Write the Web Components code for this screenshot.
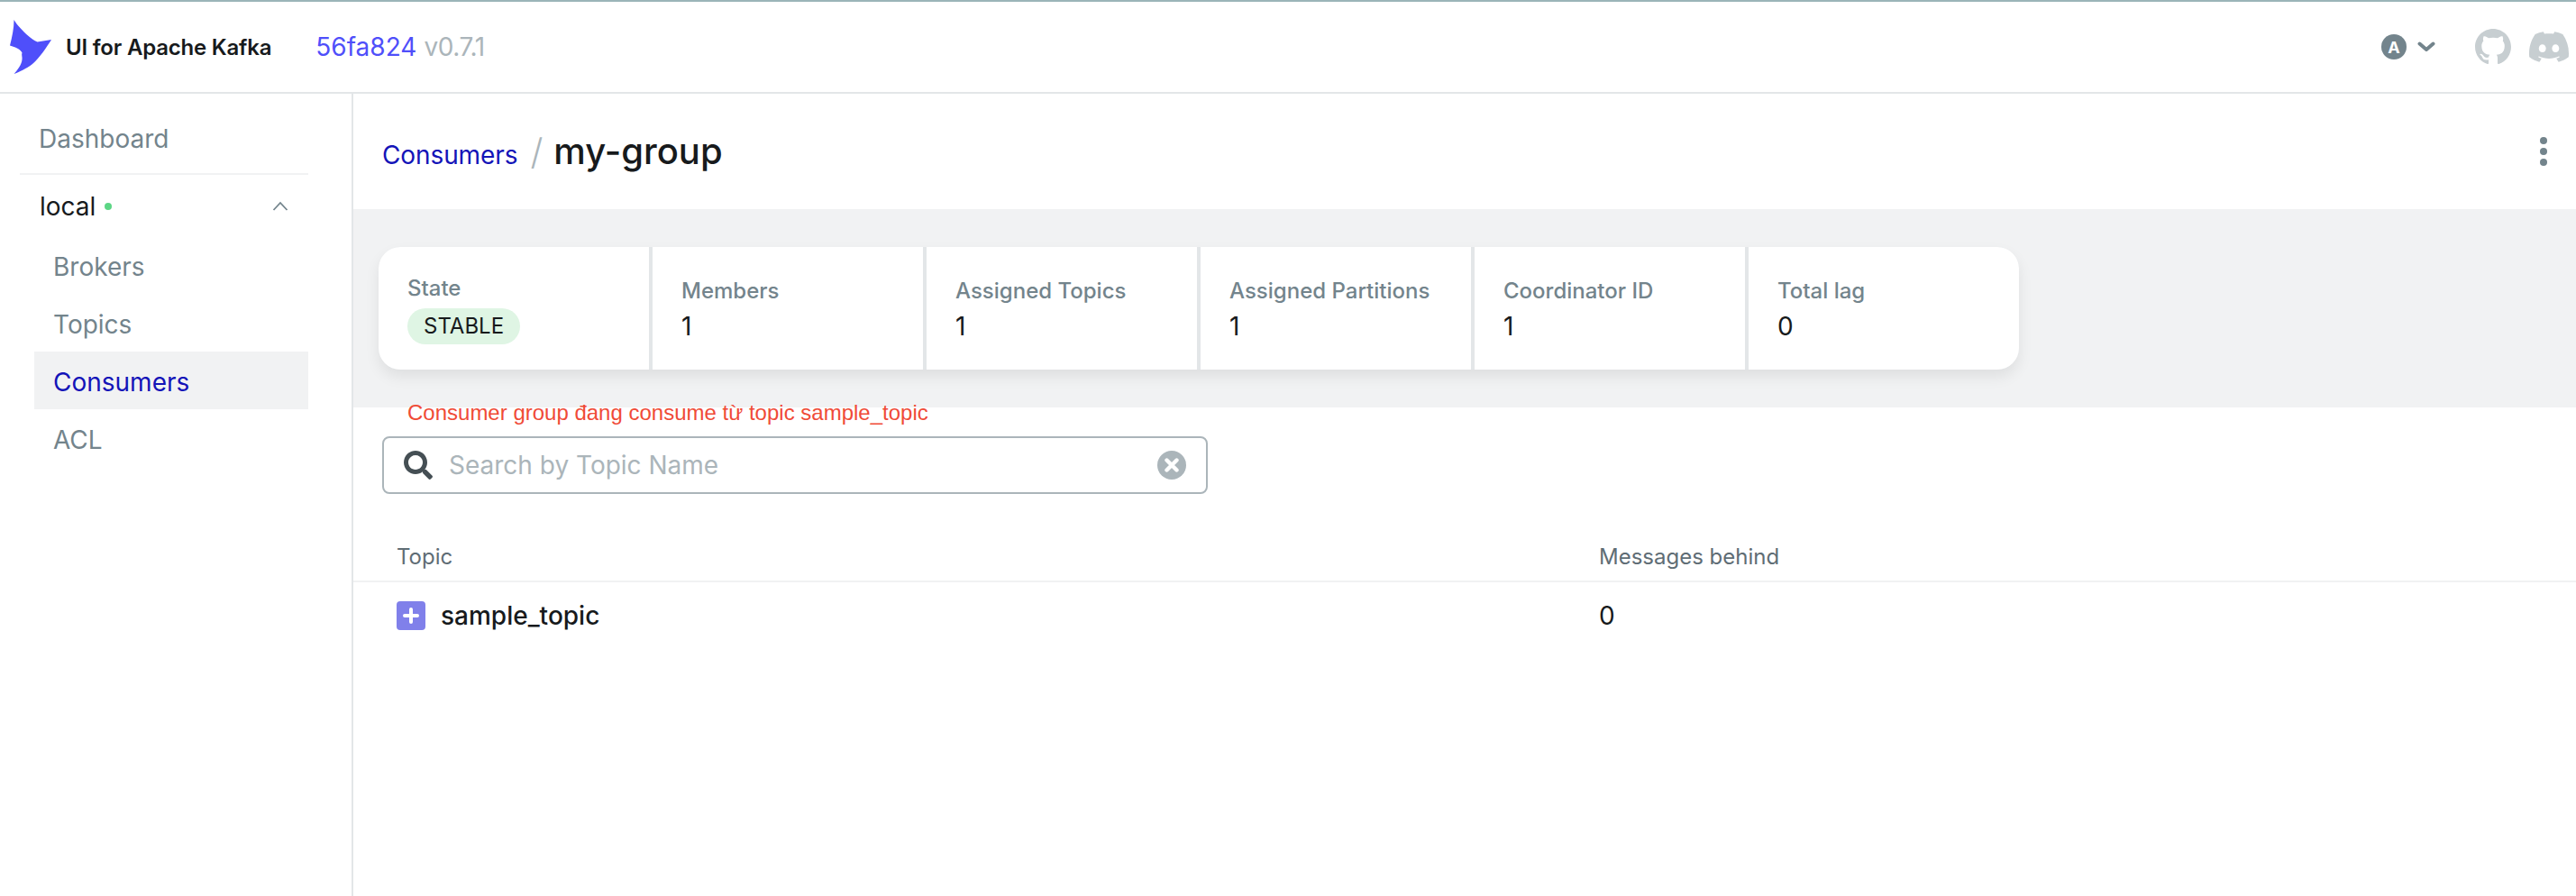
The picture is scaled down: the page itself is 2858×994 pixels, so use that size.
<!DOCTYPE html>
<html lang="en"><head><meta charset="utf-8"><title>UI for Apache Kafka</title>
<style>
html,body{margin:0;height:100%;background:#fff}
body{font-family:Inter,"Noto Sans",sans-serif;color:#171a1c;font-size:28px}
</style></head><body>
<kafka-app></kafka-app>
<script>
function def(name, css, html){
  customElements.define(name, class extends HTMLElement{
    constructor(){super();const s=this.attachShadow({mode:'open'});s.innerHTML='<style>'+css+'</style>'+html(this);}
  });
}
const ICON={
 search:'<svg viewBox="0 0 512 512" width="32" height="32" fill="#454f54"><path d="M505 442.7L405.3 343c-4.5-4.5-10.6-7-17-7H372c27.6-35.3 44-79.7 44-128C416 93.1 322.9 0 208 0S0 93.1 0 208s93.1 208 208 208c48.3 0 92.7-16.4 128-44v16.3c0 6.4 2.5 12.5 7 17l99.7 99.7c9.4 9.4 24.6 9.4 33.9 0l28.3-28.3c9.4-9.4 9.4-24.6.1-34zM208 336c-70.7 0-128-57.2-128-128 0-70.7 57.2-128 128-128 70.7 0 128 57.2 128 128 0 70.7-57.2 128-128 128z"/></svg>',
 clear:'<svg viewBox="0 0 32 32" width="32" height="32"><circle cx="16" cy="16" r="16" fill="#abb5ba"/><path d="M10.5 10.5l11 11M21.5 10.5l-11 11" stroke="#fff" stroke-width="4.4" stroke-linecap="round"/></svg>',
 github:'<svg viewBox="0 0 16 16" width="40" height="40" fill="#c7ced1"><path d="M8 0C3.58 0 0 3.58 0 8c0 3.54 2.29 6.53 5.47 7.59.4.07.55-.17.55-.38 0-.19-.01-.82-.01-1.49-2.01.37-2.53-.49-2.69-.94-.09-.23-.48-.94-.82-1.13-.28-.15-.68-.52-.01-.53.63-.01 1.08.58 1.23.82.72 1.21 1.87.87 2.33.66.07-.52.28-.87.51-1.07-1.78-.2-3.64-.89-3.64-3.95 0-.87.31-1.59.82-2.15-.08-.2-.36-1.02.08-2.12 0 0 .67-.21 2.2.82.64-.18 1.32-.27 2-.27.68 0 1.36.09 2 .27 1.53-1.04 2.2-.82 2.2-.82.44 1.1.16 1.92.08 2.12.51.56.82 1.27.82 2.15 0 3.07-1.87 3.75-3.65 3.95.29.25.54.73.54 1.48 0 1.07-.01 1.93-.01 2.2 0 .21.15.46.55.38A8.013 8.013 0 0016 8c0-4.42-3.58-8-8-8z"/></svg>',
 discord:'<svg viewBox="0 0 24 24" width="44" height="44" fill="#c7ced1"><path d="M20.317 4.3698a19.7913 19.7913 0 00-4.8851-1.5152.0741.0741 0 00-.0785.0371c-.211.3753-.4447.8648-.6083 1.2495-1.8447-.2762-3.68-.2762-5.4868 0-.1636-.3933-.4058-.8742-.6177-1.2495a.077.077 0 00-.0785-.037 19.7363 19.7363 0 00-4.8852 1.515.0699.0699 0 00-.0321.0277C.5334 9.0458-.319 13.5799.0992 18.0578a.0824.0824 0 00.0312.0561c2.0528 1.5076 4.0413 2.4228 5.9929 3.0294a.0777.0777 0 00.0842-.0276c.4616-.6304.8731-1.2952 1.226-1.9942a.076.076 0 00-.0416-.1057c-.6528-.2476-1.2743-.5495-1.8722-.8923a.077.077 0 01-.0076-.1277c.1258-.0943.2517-.1923.3718-.2914a.0743.0743 0 01.0776-.0105c3.9278 1.7933 8.18 1.7933 12.0614 0a.0739.0739 0 01.0785.0095c.1202.099.246.1981.3728.2924a.077.077 0 01-.0066.1276 12.2986 12.2986 0 01-1.873.8914.0766.0766 0 00-.0407.1067c.3604.698.7719 1.3628 1.225 1.9932a.076.076 0 00.0842.0286c1.961-.6067 3.9495-1.5219 6.0023-3.0294a.077.077 0 00.0313-.0552c.5004-5.177-.8382-9.6739-3.5485-13.6604a.061.061 0 00-.0312-.0286zM8.02 15.3312c-1.1825 0-2.1569-1.0857-2.1569-2.419 0-1.3332.9555-2.4189 2.157-2.4189 1.2108 0 2.1757 1.0952 2.1568 2.419 0 1.3332-.9555 2.4189-2.1569 2.4189zm7.9748 0c-1.1825 0-2.1569-1.0857-2.1569-2.419 0-1.3332.9554-2.4189 2.1569-2.4189 1.2108 0 2.1757 1.0952 2.1568 2.419 0 1.3332-.946 2.4189-2.1568 2.4189Z"/></svg>'
};

def('kafka-header',`
:host{display:flex;align-items:center;height:100px;border-top:2px solid #9bb5b8;border-bottom:2px solid #e3e6e8;background:#fff}
.logo{display:block;margin-left:11px;width:46px;height:60px;flex:none}
.title{margin-left:16px;font-size:24px;font-weight:600;color:#171a1c;white-space:nowrap;letter-spacing:-.2px}
.hash{margin-left:49px;color:#4f4ffa}
.ver{margin-left:8px;color:#abb5ba;letter-spacing:-.4px}
.right{margin-left:auto;display:flex;align-items:center}
.avatar{width:28px;height:28px;border-radius:50%;background:#73848c;color:#fff;font-size:18px;font-weight:700;display:flex;align-items:center;justify-content:center}
.chev{margin-left:12px;display:block}
.gh{margin-left:44px;display:flex}
.dc{margin-left:20px;margin-right:8px;display:flex}
`,()=>`
<svg class="logo" viewBox="0 0 46 60"><path fill="#4f4ffa" d="M4.5 0C8 6 15 13 20 17.5 23 20 27 23 30.500 24.500L46 22C41 30 33 42 25 49 18 54.500 10 58 4.500 60 8 56 13 50 13.500 44 14 41 12.500 39 13.500 36.500 12 33 6 30 0 28.500 2.500 19 4.500 9 4.500 0Z"/></svg>
<span class="title">UI for Apache Kafka</span>
<span class="hash">56fa824</span><span class="ver">v0.7.1</span>
<div class="right">
  <span class="avatar">A</span>
  <svg class="chev" width="20" height="12" viewBox="0 0 20 12"><path d="M2.500 2.500L10 9l7.500-6.500" fill="none" stroke="#73848c" stroke-width="4" stroke-linecap="round" stroke-linejoin="round"/></svg>
  <span class="gh">${ICON.github}</span>
  <span class="dc">${ICON.discord}</span>
</div>`);

def('side-item',`
:host{display:flex;align-items:center;height:64px;box-sizing:border-box;padding:4px 0 0 21px;margin-left:16px;color:#73848c;white-space:nowrap}
:host([active]){background:#f1f2f3;color:#1414b8}
`,()=>'<slot></slot>');

def('kafka-sidebar',`
:host{display:block;width:390px;border-right:2px solid #e3e6e8;padding:18px 0 0 0;flex:none}
.wrap{width:320px;margin-left:22px}
.dash{height:64px;padding-left:21px;display:flex;align-items:center;color:#73848c;border-bottom:2px solid #f1f2f3;padding-bottom:6px}
.local{height:68px;display:flex;align-items:center;padding:2px 0 0 22px;box-sizing:border-box;color:#171a1c}
.dot{width:8px;height:8px;border-radius:50%;background:#5cd685;margin-left:10px}
.chev{margin-left:auto;margin-right:22px;display:block}
`,()=>`
<div class="wrap">
  <div class="dash">Dashboard</div>
  <div class="local">local<span class="dot"></span>
    <svg class="chev" width="18" height="12" viewBox="0 0 18 12"><path d="M1.500 10L9 2l7.500 8" fill="none" stroke="#73848c" stroke-width="1.800"/></svg>
  </div>
  <div class="list">
    <side-item>Brokers</side-item>
    <side-item>Topics</side-item>
    <side-item active>Consumers</side-item>
    <side-item>ACL</side-item>
  </div>
</div>`);

def('page-heading',`
:host{display:flex;align-items:center;height:128px;padding-left:32px;padding-right:32px;background:#fff}
.crumb{color:#1414b8;font-size:28px;padding-top:8px;letter-spacing:-.1px}
.sep{color:#abb5ba;font-size:40px;margin:0 12px 0 14px;font-weight:300}
.name{font-size:40px;font-weight:500;color:#171a1c;padding-bottom:2px}
.menu{margin-left:auto;display:block}
`,()=>`
<span class="crumb">Consumers</span><span class="sep">/</span><span class="name">my-group</span>
<svg class="menu" width="8" height="32" viewBox="0 0 8 32" fill="#73848c"><circle cx="4" cy="4" r="4"/><circle cx="4" cy="16" r="4"/><circle cx="4" cy="28" r="4"/></svg>`);

def('metric-cell',`
:host{display:flex;flex-direction:column;justify-content:center;width:300px;height:136px;box-sizing:border-box;padding:5px 0 0 32px;background:#fff}
.label{font-size:24px;font-weight:500;color:#73848c;line-height:32px}
.value{font-size:28px;line-height:40px;color:#171a1c;margin-top:3px}
:host(:first-child){border-radius:24px 0 0 24px}
:host(:last-child){border-radius:0 24px 24px 0}
:host([pill]){padding-top:1px}
:host([pill]) .value{margin-top:6px}
`,()=>`<div class="label"><slot name="label"></slot></div><div class="value"><slot></slot></div>`);

def('status-pill',`
:host{display:inline-flex;align-items:center;height:40px;padding:0 18px;border-radius:20px;background:#dff5e4;font-size:24px;color:#171a1c;font-weight:400;vertical-align:top}
`,()=>'<slot></slot>');

def('metrics-band',`
:host{display:block;height:220px;box-sizing:border-box;padding:42px 0 0 28px;background:#f1f2f3}
.row{display:inline-flex;gap:4px;background:#e3e6e8;border-radius:24px;box-shadow:0 8px 16px rgba(0,0,0,.08)}
`,()=>`<div class="row">
<metric-cell pill><span slot="label">State</span><status-pill>STABLE</status-pill></metric-cell>
<metric-cell><span slot="label">Members</span>1</metric-cell>
<metric-cell><span slot="label">Assigned Topics</span>1</metric-cell>
<metric-cell><span slot="label">Assigned Partitions</span>1</metric-cell>
<metric-cell><span slot="label">Coordinator ID</span>1</metric-cell>
<metric-cell><span slot="label">Total lag</span>0</metric-cell>
</div>`);

def('search-box',`
:host{display:flex;align-items:center;width:916px;height:64px;box-sizing:border-box;border:2px solid #abb5ba;border-radius:8px;padding:0 22px;background:#fff;margin-left:32px}
.ph{margin-left:18px;color:#abb5ba;flex:1}
svg{display:block;flex:none}
`,()=>`${ICON.search}<span class="ph">Search by Topic Name</span>${ICON.clear}`);

def('topic-table',`
:host{display:block;margin-top:30px}
.head,.row{display:grid;grid-template-columns:1334px 1fr;padding-left:48px}
.head{height:68px;box-sizing:border-box;border-bottom:2px solid #f1f2f3;align-items:center;font-size:24px;color:#5f6d75;padding-top:12px}
.row{height:72px;align-items:center;padding-top:2px;box-sizing:border-box;color:#171a1c}
.name{display:flex;align-items:center;gap:17px;font-weight:500}
.plus{display:block}
`,()=>`
<div class="head"><span>Topic</span><span>Messages behind</span></div>
<div class="row"><div class="name"><svg class="plus" width="32" height="32" viewBox="0 0 32 32"><rect width="32" height="32" rx="4" fill="#8080ea"/><path d="M16 9v14M9 16h14" stroke="#fff" stroke-width="4" stroke-linecap="round"/></svg>sample_topic</div><span>0</span></div>`);

def('group-details',`
:host{display:block;flex:1;min-width:0}
.body{position:relative;padding:32px 0 0 0}
.anno{position:absolute;left:60px;top:-9px;font-family:"Liberation Sans",Arial,sans-serif;font-size:24px;line-height:30px;color:#f04b37;white-space:nowrap}
`,()=>`
<page-heading></page-heading>
<metrics-band></metrics-band>
<div class="body">
  <span class="anno">Consumer group đang consume từ topic sample_topic</span>
  <search-box></search-box>
  <topic-table></topic-table>
</div>`);

def('kafka-app',`
:host{display:flex;flex-direction:column;height:994px;overflow:hidden}
.cols{display:flex;flex:1;min-height:0}
`,()=>`<kafka-header></kafka-header><div class="cols"><kafka-sidebar></kafka-sidebar><group-details></group-details></div>`);
</script>
</body></html>
